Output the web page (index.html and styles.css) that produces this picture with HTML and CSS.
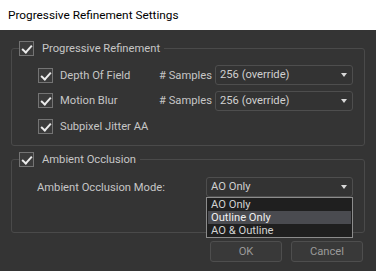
FILE: index.html
```html
<!DOCTYPE html>
<html lang="en">
	<head>
		<meta charset="utf-8">
		<title>Progressive Refinement Settings</title>
		<link rel="stylesheet" href="styles.css">
	</head>
	<body>
		<div class="titlebar">Progressive Refinement Settings</div>
		<div class="dialog">
			<fieldset class="group">
				<legend><span class="check on"></span>Progressive Refinement</legend>
				<div class="row">
					<span class="check on"></span><span class="label sub">Depth Of Field</span>
					<span class="samples">#&nbsp;Samples</span>
					<div class="combo wide">256 (override)<span class="arrow"></span></div>
				</div>
				<div class="row">
					<span class="check on"></span><span class="label sub">Motion Blur</span>
					<span class="samples">#&nbsp;Samples</span>
					<div class="combo wide">256 (override)<span class="arrow"></span></div>
				</div>
				<div class="row">
					<span class="check on"></span><span class="label sub">Subpixel Jitter AA</span>
				</div>
			</fieldset>
			<fieldset class="group ao">
				<legend><span class="check on"></span>Ambient Occlusion</legend>
				<div class="row mode">
					<span class="label">Ambient Occlusion Mode:</span>
					<div class="combo open">AO Only<span class="arrow"></span>
						<ul class="popup">
							<li>AO Only</li>
							<li class="hot">Outline Only</li>
							<li>AO &amp; Outline</li>
						</ul>
					</div>
				</div>
			</fieldset>
			<div class="buttons">
				<button class="btn">OK</button>
				<button class="btn">Cancel</button>
			</div>
		</div>
	</body>
</html>
```

FILE: styles.css
```css
html, body {
	margin: 0;
	padding: 0;
}
body {
	width: 376px;
	height: 271px;
	overflow: hidden;
	font-family: Roboto, "Open Sans", sans-serif;
	font-size: 11.2px;
	background-color: #343434;
}
.titlebar {
	height: 30px;
	line-height: 31px;
	padding-left: 8px;
	background-color: #fff;
	color: #000;
	font-size: 11.8px;
}
.dialog {
	padding: 11px 11px 0 11px;
	color: #c6c6c6;
}
.group {
	margin: 0;
	padding: 9px 11px 9px 8px;
	border: 1px solid #4a4a4a;
	border-radius: 3px;
	min-width: 0;
}
.group legend {
	display: flex;
	align-items: center;
	height: 15px;
	padding: 0 4px 0 0;
	margin-left: -1px;
}
.group legend .check {
	margin-right: 8px;
}
.check {
	position: relative;
	display: inline-block;
	box-sizing: border-box;
	width: 15px;
	height: 15px;
	border: 1px solid #747474;
	background-color: #3b3b3b;
	flex: none;
}
.check.on:after {
	content: "";
	position: absolute;
	left: 4px;
	top: 1px;
	width: 4px;
	height: 8px;
	border: solid #ececec;
	border-width: 0 2.5px 2.5px 0;
	transform: rotate(42deg);
}
.row {
	display: flex;
	align-items: center;
	height: 20px;
	margin-left: 18px;
}
.row + .row {
	margin-top: 5.5px;
}
.label.sub {
	margin-left: 7px;
}
.samples {
	margin-left: auto;
	width: 56px;
}
.combo {
	position: relative;
	box-sizing: border-box;
	height: 20px;
	line-height: 18px;
	padding-left: 4px;
	border: 1px solid #4e4e4e;
	border-radius: 3px;
	background-color: #333;
	color: #d0d0d0;
}
.combo.wide {
	width: 138px;
}
.arrow {
	position: absolute;
	right: 5px;
	top: 7px;
	border-style: solid;
	border-width: 4px 3.5px 0 3.5px;
	border-color: #d8d8d8 transparent transparent transparent;
}
.ao {
	margin-top: 6px;
	padding-top: 10px;
	padding-bottom: 35px;
}
.mode {
	margin-left: 17px;
}
.mode .combo {
	margin-left: auto;
	width: 147px;
}
.popup {
	position: absolute;
	left: -1px;
	top: 19px;
	width: 147px;
	box-sizing: border-box;
	margin: 0;
	padding: 0 1px;
	list-style: none;
	border: 1px solid #8c8c8c;
	background-color: #1f1f1f;
	z-index: 5;
}
.popup li {
	height: 13px;
	line-height: 13px;
	padding-left: 3px;
	color: #d2d2d2;
}
.popup li.hot {
	background-color: #4a4b50;
	color: #f0f0f0;
}
.buttons {
	display: flex;
	justify-content: flex-end;
	gap: 9px;
	margin-top: 8px;
	margin-right: 2px;
}
.btn {
	width: 72px;
	height: 21px;
	padding: 0;
	font-family: inherit;
	font-size: 11.2px;
	color: #999;
	background-color: #393939;
	border: 1px solid #4e4e4e;
	border-radius: 3px;
}
```
